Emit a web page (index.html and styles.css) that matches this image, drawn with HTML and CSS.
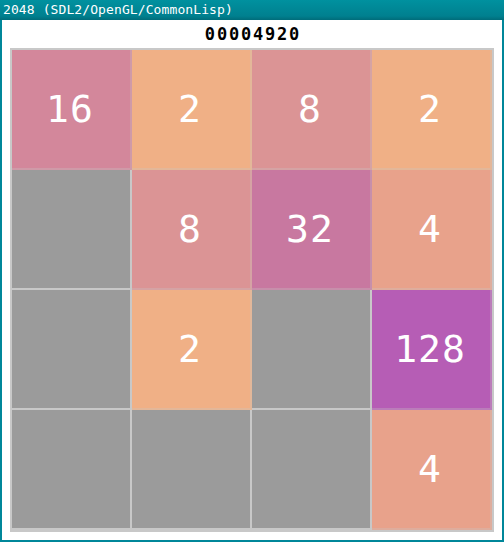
FILE: index.html
```html
<!DOCTYPE html>
<html>
<head>
<meta charset="utf-8">
<link rel="stylesheet" href="styles.css">
</head>
<body>
<div class="window">
  <div class="titlebar">2048 (SDL2/OpenGL/CommonLisp)</div>
  <div class="client">
    <div class="score">00004920</div>
    <div class="board">
      <div class="cell t16">16</div>
      <div class="cell t2">2</div>
      <div class="cell t8">8</div>
      <div class="cell t2">2</div>

      <div class="cell empty"></div>
      <div class="cell t8">8</div>
      <div class="cell t32">32</div>
      <div class="cell t4">4</div>

      <div class="cell empty"></div>
      <div class="cell t2">2</div>
      <div class="cell empty"></div>
      <div class="cell t128">128</div>

      <div class="cell empty"></div>
      <div class="cell empty"></div>
      <div class="cell empty"></div>
      <div class="cell t4">4</div>
    </div>
  </div>
</div>
</body>
</html>
```
FILE: styles.css
```css
html, body {
  margin: 0;
  padding: 0;
}
body {
  width: 504px;
  height: 542px;
  background: #00879a;
  overflow: hidden;
}
.window {
  display: flex;
  flex-direction: column;
  width: 504px;
  height: 542px;
}
.titlebar {
  height: 20px;
  box-sizing: border-box;
  padding: 2px 0 0 3px;
  background: linear-gradient(#00919f, #00808f 80%, #006c7a);
  color: #ffffff;
  font-family: "DejaVu Sans Mono", "Liberation Mono", monospace;
  font-size: 13px;
  line-height: 15px;
  letter-spacing: 0.1px;
  white-space: nowrap;
}
.client {
  margin: 0 2px 2px 2px;
  height: 520px;
  background: #ffffff;
  display: flex;
  flex-direction: column;
  align-items: center;
}
.score {
  height: 28px;
  box-sizing: border-box;
  padding-top: 5px;
  padding-left: 2px;
  color: #000000;
  font-family: "DejaVu Sans Mono", "Liberation Mono", monospace;
  font-size: 17px;
  line-height: 18px;
  letter-spacing: 1.8px;
  font-weight: bold;
}
.board {
  width: 484px;
  height: 484px;
  box-sizing: border-box;
  padding: 2px;
  background: #c8c8c8;
  display: grid;
  grid-template-columns: repeat(4, 120px);
  grid-template-rows: repeat(4, 120px);
}
.cell {
  box-sizing: border-box;
  border-right: 2px solid rgba(200, 200, 200, 0.3);
  border-bottom: 2px solid rgba(200, 200, 200, 0.3);
  display: flex;
  align-items: center;
  justify-content: center;
  padding-right: 2px;
  color: #ffffff;
  font-family: "DejaVu Sans Mono", "Liberation Mono", monospace;
  font-size: 38px;
  line-height: 40px;
  letter-spacing: 1px;
}
.empty {
  background: #9b9b9b;
  border-color: #c8c8c8;
}
.t2 { background: #f0b086; }
.t4 { background: #e8a28b; }
.t8 { background: #db9495; }
.t16 { background: #d3879b; }
.t32 { background: #c878a0; }
.t128 { background: #b65db5; }
```
